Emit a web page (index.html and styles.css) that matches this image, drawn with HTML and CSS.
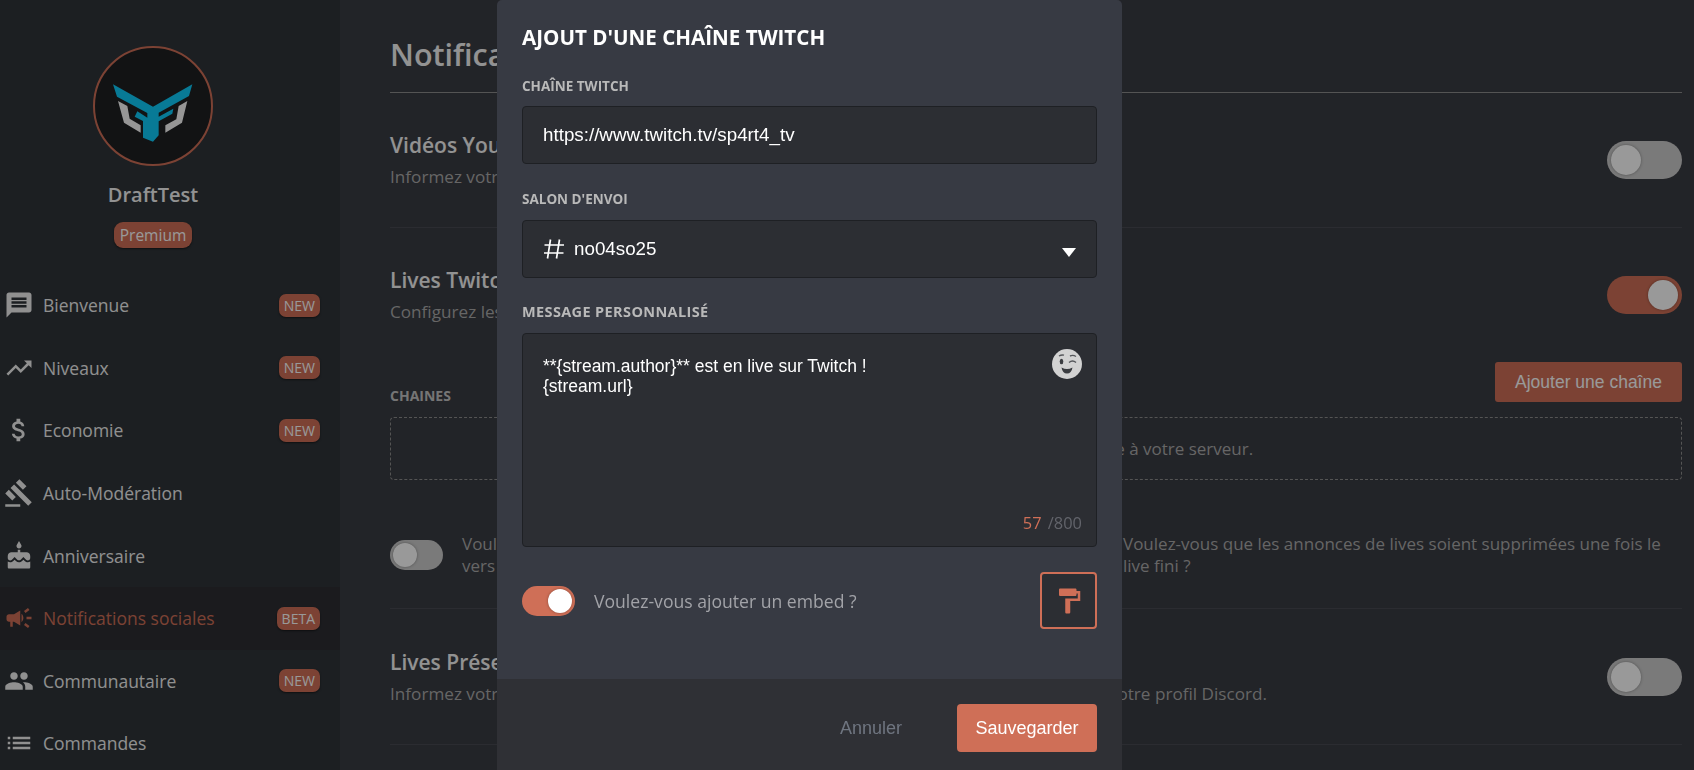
FILE: index.html
```html
<!DOCTYPE html>
<html lang="fr">
<head>
<meta charset="utf-8">
<title>Notifications sociales</title>
<link rel="stylesheet" href="styles.css">
</head>
<body>
<div class="app">
  <aside class="sidebar">
    <div class="guild">
      <div class="avatar">
        <svg class="logo" viewBox="0 0 270 210">
          <path fill="#0ecbfa" d="M15 25 135 92 253 25 243 60 152 110V122L196 98 193 113 152 136V178L135 197 105 185V135L80 122 88 106 118 125V111L27 62Z"/>
          <path fill="#fafafa" d="M30 75 58 90 65 128 98 148V170L48 140ZM238 75 212 90 205 130 172 148V170L222 140Z"/>
        </svg>
      </div>
      <div class="guild-name">DraftTest</div>
      <span class="premium">Premium</span>
    </div>
    <nav class="nav">
      <a class="nav-item"><svg class="nav-icon" viewBox="0 0 24 24"><path d="M20 2H4c-1.1 0-1.99.9-1.99 2L2 22l4-4h14c1.1 0 2-.9 2-2V4c0-1.1-.9-2-2-2zm-2 12H6v-2h12v2zm0-3H6V9h12v2zm0-3H6V6h12v2z"/></svg><span class="nav-label">Bienvenue</span><span class="badge">NEW</span></a>
      <a class="nav-item"><svg class="nav-icon" viewBox="0 0 24 24"><path d="M16 6l2.29 2.29-4.88 4.88-4-4L2 16.59 3.41 18l6-6 4 4 6.3-6.29L22 12V6z"/></svg><span class="nav-label">Niveaux</span><span class="badge">NEW</span></a>
      <a class="nav-item"><svg class="nav-icon" viewBox="0 0 24 24"><path d="M11.8 10.9c-2.27-.59-3-1.2-3-2.15 0-1.09 1.01-1.85 2.7-1.85 1.78 0 2.44.85 2.5 2.1h2.21c-.07-1.72-1.12-3.3-3.21-3.81V3h-3v2.16c-1.94.42-3.5 1.68-3.5 3.61 0 2.31 1.91 3.46 4.7 4.13 2.5.6 3 1.48 3 2.41 0 .69-.49 1.79-2.7 1.79-2.06 0-2.87-.92-2.98-2.1h-2.2c.12 2.19 1.76 3.42 3.68 3.83V21h3v-2.15c1.95-.37 3.5-1.5 3.5-3.55 0-2.84-2.43-3.81-4.7-4.4z"/></svg><span class="nav-label">Economie</span><span class="badge">NEW</span></a>
      <a class="nav-item"><svg class="nav-icon" viewBox="0 0 24 24"><path d="M1 21h12v2H1zM5.245 8.07l2.83-2.827 14.14 14.142-2.828 2.828zM12.317 1l5.657 5.656-2.83 2.83-5.654-5.66zM3.825 9.485l5.657 5.657-2.828 2.828-5.657-5.657z"/></svg><span class="nav-label">Auto-Modération</span></a>
      <a class="nav-item"><svg class="nav-icon" viewBox="0 0 24 24"><path d="M12 6c1.11 0 2-.9 2-2 0-.38-.1-.73-.29-1.03L12 0l-1.71 2.97c-.19.3-.29.65-.29 1.03 0 1.1.9 2 2 2zm4.6 9.99l-1.07-1.07-1.08 1.07c-1.3 1.3-3.58 1.31-4.89 0l-1.07-1.07-1.09 1.07C6.75 16.64 5.88 17 4.96 17c-.73 0-1.4-.23-1.96-.61V21c0 .55.45 1 1 1h16c.55 0 1-.45 1-1v-4.61c-.56.38-1.23.61-1.96.61-.92 0-1.79-.36-2.44-1.01zM18 9h-5V7h-2v2H6c-1.66 0-3 1.34-3 3v1.54c0 1.08.88 1.96 1.96 1.96.52 0 1.02-.2 1.38-.57l2.14-2.13 2.13 2.13c.74.74 2.03.74 2.77 0l2.14-2.13 2.13 2.13c.37.37.86.57 1.38.57 1.08 0 1.96-.88 1.96-1.96V12C21 10.34 19.66 9 18 9z"/></svg><span class="nav-label">Anniversaire</span></a>
      <a class="nav-item active"><svg class="nav-icon" viewBox="0 0 24 24"><path d="M18 11v2h4v-2h-4zm-2 6.61c.96.71 2.21 1.65 3.2 2.39.4-.53.8-1.07 1.2-1.6-.99-.74-2.24-1.68-3.2-2.4-.4.54-.8 1.08-1.2 1.61zM20.4 5.6c-.4-.53-.8-1.07-1.2-1.6-.99.74-2.24 1.68-3.2 2.4.4.53.8 1.07 1.2 1.6.96-.72 2.21-1.65 3.2-2.4zM4 9c-1.1 0-2 .9-2 2v2c0 1.1.9 2 2 2h1v4h2v-4h1l5 3V6L8 9H4zm11.5 3c0-1.33-.58-2.53-1.5-3.35v6.69c.92-.81 1.5-2.01 1.5-3.34z"/></svg><span class="nav-label">Notifications sociales</span><span class="badge">BETA</span></a>
      <a class="nav-item"><svg class="nav-icon" viewBox="0 0 24 24"><path d="M16 11c1.66 0 2.99-1.34 2.99-3S17.66 5 16 5c-1.66 0-3 1.34-3 3s1.34 3 3 3zm-8 0c1.66 0 2.99-1.34 2.99-3S9.66 5 8 5C6.34 5 5 6.34 5 8s1.34 3 3 3zm0 2c-2.33 0-7 1.17-7 3.5V19h14v-2.5c0-2.33-4.67-3.5-7-3.5zm8 0c-.29 0-.62.02-.97.05 1.16.84 1.97 1.97 1.97 3.45V19h6v-2.5c0-2.33-4.67-3.5-7-3.5z"/></svg><span class="nav-label">Communautaire</span><span class="badge">NEW</span></a>
      <a class="nav-item"><svg class="nav-icon" viewBox="0 0 24 24"><path d="M3 13h2v-2H3v2zm0 4h2v-2H3v2zm0-8h2V7H3v2zm4 4h14v-2H7v2zm0 4h14v-2H7v2zM7 7v2h14V7H7z"/></svg><span class="nav-label">Commandes</span></a>
    </nav>
  </aside>

  <main class="main">
    <h1 class="page-title">Notifications sociales</h1>

    <section class="setting">
      <div>
        <h2 class="setting-title">Vidéos YouTube</h2>
        <p class="setting-sub">Informez votre communauté lorsqu'une nouvelle vidéo est publiée.</p>
      </div>
      <span class="toggle toggle-lg"></span>
    </section>

    <section class="setting setting-open">
      <div>
        <h2 class="setting-title">Lives Twitch</h2>
        <p class="setting-sub">Configurez les annonces de lives de vos chaînes préférées.</p>
      </div>
      <span class="toggle toggle-lg toggle-on"></span>
    </section>

    <div class="channels-head">
      <span class="channels-label">CHAINES</span>
      <button class="btn-add">Ajouter une chaîne</button>
    </div>
    <div class="channels-empty">Aucune chaîne Twitch n'est encore liée à votre serveur.</div>

    <div class="options">
      <div class="option">
        <span class="toggle"></span>
        <span class="option-text">Voulez-vous que le message d'annonce soit envoyé<br>vers un autre salon de votre serveur ?</span>
      </div>
      <div class="option">
        <span class="toggle"></span>
        <span class="option-text">Voulez-vous que les annonces de lives soient supprimées une fois le live fini ?</span>
      </div>
    </div>

    <section class="setting setting-last">
      <div>
        <h2 class="setting-title">Lives Présence</h2>
        <p class="setting-sub">Informez votre communauté lorsqu'un membre passe en live, d'après le statut affiché sur votre profil Discord.</p>
      </div>
      <span class="toggle toggle-lg"></span>
    </section>
  </main>
</div>

<div class="overlay">
  <div class="modal">
    <div class="modal-body">
      <h3 class="modal-title">AJOUT D'UNE CHAÎNE TWITCH</h3>

      <div class="field-label field-label-first">CHAÎNE TWITCH</div>
      <div class="input">https://www.twitch.tv/sp4rt4_tv</div>

      <div class="field-label field-label-second">SALON D'ENVOI</div>
      <div class="input select">
        <svg class="hash" viewBox="0 0 22 22"><path d="M7.5 1.5 4.5 20.5M16.5 1.5 13.5 20.5M1.5 7H21M1 15H20.5"/></svg>
        <span class="select-value">no04so25</span>
        <span class="caret"></span>
      </div>

      <div class="field-label field-label-wide">MESSAGE PERSONNALISÉ</div>
      <div class="textarea">
        <div class="textarea-top">
          <div class="message">**{stream.author}** est en live sur Twitch !<br>{stream.url}</div>
          <svg class="emoji" viewBox="0 0 30 30">
            <circle cx="15" cy="15" r="15" fill="#d2d2d2"/>
            <ellipse cx="9.500" cy="12.500" rx="1.800" ry="2.800" fill="#3a3c40"/>
            <path d="M17 13.500q3.500-3 7 0M7 7q2.500-1.500 5-.8M18 7q3-1.500 6 .5" fill="none" stroke="#55575b" stroke-width="1.400"/>
            <path d="M9.500 18.500q5.500 3 11 0q-1 6-5.500 6t-5.500-6z" fill="#3a3c40"/>
          </svg>
        </div>
        <div class="count"><span class="count-now">57</span> <span class="count-max">/800</span></div>
      </div>

      <div class="embed-row">
        <span class="toggle toggle-accent"></span>
        <span class="embed-text">Voulez-vous ajouter un embed ?</span>
        <button class="embed-btn">
          <svg viewBox="0 0 24 24"><path d="M18 4V3c0-.55-.45-1-1-1H5c-.55 0-1 .45-1 1v4c0 .55.45 1 1 1h12c.55 0 1-.45 1-1V6h1v4H9v11c0 .55.45 1 1 1h2c.55 0 1-.45 1-1v-9h8V4h-3z"/></svg>
        </button>
      </div>
    </div>
    <div class="modal-footer">
      <button class="btn-cancel">Annuler</button>
      <button class="btn-save">Sauvegarder</button>
    </div>
  </div>
</div>
</body>
</html>
```

FILE: styles.css
```css
* { box-sizing: border-box; }

html, body {
  margin: 0;
  height: 770px;
  overflow: hidden;
  background: #3a3c43;
  font-family: "Open Sans", sans-serif;
}

.app {
  display: flex;
  height: 770px;
  overflow: hidden;
}

/* Sidebar */
.sidebar {
  flex: 0 0 340px;
  padding-top: 46px;
  background: #2f3439;
}

.guild {
  display: flex;
  flex-direction: column;
  align-items: center;
  width: 306px;
}

.avatar {
  width: 120px;
  height: 120px;
  display: flex;
  align-items: center;
  justify-content: center;
  padding-top: 10px;
  border: 2px solid #cf6f57;
  border-radius: 50%;
  background: #1e2022;
}

.logo { width: 90px; height: 70px; }

.guild-name {
  margin-top: 14px;
  font-size: 20px;
  font-weight: 600;
  line-height: 30px;
  color: #f4f4f4;
}

.premium {
  margin-top: 12px;
  padding: 0 6px;
  font-size: 15.500px;
  line-height: 26px;
  color: #fff;
  background: #cf6f57;
  border-radius: 9px;
  box-shadow: 0 1px 2px rgba(0, 0, 0, .5);
}

.nav { margin-top: 26px; }

.nav-item {
  display: flex;
  align-items: center;
  height: 62.600px;
  padding: 0 20px 0 4px;
  color: #f0f0f0;
}

.nav-icon {
  flex: 0 0 30px;
  width: 30px;
  height: 30px;
  fill: currentColor;
}

.nav-label {
  flex: 1;
  margin-left: 9px;
  font-size: 17.500px;
}

.nav-item.active {
  color: #cf6f57;
  background: #2d2e33;
}

.badge {
  padding: 0 5px;
  font-size: 14px;
  line-height: 23px;
  color: #fff;
  background: #cf6f57;
  border-radius: 7px;
  box-shadow: 0 1px 2px rgba(0, 0, 0, .5);
}

/* Main content */
.main {
  flex: 1;
  min-width: 0;
  padding: 32px 12px 0 50px;
}

.page-title {
  margin: 0;
  padding-bottom: 16px;
  font-size: 30.500px;
  font-weight: 600;
  line-height: 44px;
  color: #f4f4f4;
  border-bottom: 1px solid #8c8c8c;
}

.setting {
  display: flex;
  align-items: center;
  justify-content: space-between;
  padding: 37px 0 38px;
  border-bottom: 1px solid #484a52;
}

.setting-open { border-bottom: 0; padding-bottom: 0; }

.setting-last { padding-top: 38px; }

.setting-title {
  margin: 0;
  font-size: 21px;
  font-weight: 600;
  line-height: 30px;
  color: #f4f4f4;
}

.setting-sub {
  margin: 5px 0 0;
  font-size: 17.150px;
  line-height: 24px;
  color: #aaa;
}

.toggle {
  flex: none;
  display: flex;
  width: 53px;
  height: 30px;
  padding: 3px;
  border-radius: 15px;
  background: #cbcbcb;
}

.toggle::after {
  content: "";
  width: 24px;
  height: 24px;
  border-radius: 50%;
  background: #fff;
  box-shadow: 0 0 3px rgba(0, 0, 0, .35);
}

.toggle-lg {
  width: 75px;
  height: 38px;
  padding: 4px;
  border-radius: 19px;
}

.toggle-lg::after { width: 30px; height: 30px; }

.toggle-on, .toggle-accent {
  justify-content: flex-end;
  background: #cf6f57;
}

.channels-head {
  display: flex;
  align-items: flex-end;
  justify-content: space-between;
  margin-top: 38px;
}

.channels-label {
  margin-bottom: -4px;
  font-size: 14px;
  font-weight: 700;
  line-height: 20px;
  color: #c4c4c4;
}

.btn-add {
  width: 187px;
  height: 40px;
  padding: 0;
  border: 0;
  border-radius: 3px;
  font-family: "Liberation Sans", sans-serif;
  font-size: 17.500px;
  color: #fff;
  background: #cf6f57;
}

.channels-empty {
  height: 63px;
  margin-top: 15px;
  font-size: 17px;
  line-height: 61px;
  text-align: center;
  color: #aaa;
  border: 1px dashed #8c8c8c;
  border-radius: 4px;
}

.options {
  display: grid;
  grid-template-columns: 1fr 1fr;
  gap: 30px;
  margin-top: 53px;
  padding-bottom: 31px;
  border-bottom: 1px solid #484a52;
}

.option {
  display: flex;
  align-items: center;
  gap: 19px;
}

.option-text {
  font-size: 17px;
  line-height: 22px;
  color: #aaa;
}

/* Modal */
.overlay {
  position: fixed;
  inset: 0;
  padding-left: 497px;
  background: rgba(0, 0, 0, .4);
}

.modal {
  width: 625px;
  height: 790px;
  border-radius: 5px 5px 0 0;
  overflow: hidden;
  background: #373a43;
}

.modal-body { padding: 22px 25px 50px; }

.modal-title {
  margin: 0;
  font-size: 20.600px;
  font-weight: 700;
  line-height: 30px;
  color: #fff;
}

.field-label {
  margin: 24px 0 11px;
  font-size: 13.500px;
  font-weight: 700;
  line-height: 20px;
  color: #b9b9b9;
}

.field-label-first { margin-bottom: 10px; }

.field-label-second { margin-top: 25px; }

.field-label-wide { font-size: 14.500px; letter-spacing: .37px; }

.input {
  height: 58px;
  padding: 0 20px;
  font-family: "Liberation Sans", sans-serif;
  font-size: 18.800px;
  line-height: 56px;
  color: #fff;
  background: #2c2e33;
  border: 1px solid #1e2024;
  border-radius: 4px;
}

.select {
  display: flex;
  align-items: center;
}

.hash {
  width: 22px;
  height: 22px;
  fill: none;
  stroke: #fff;
  stroke-width: 1.700;
}

.select-value { flex: 1; margin-left: 9px; }

.caret {
  width: 0;
  height: 0;
  margin: 7px 0 0;
  border-left: 7.500px solid transparent;
  border-right: 7.500px solid transparent;
  border-top: 9px solid #fff;
}

.textarea {
  display: flex;
  flex-direction: column;
  justify-content: space-between;
  height: 214px;
  padding: 15px 14px 11px 20px;
  background: #2c2e33;
  border: 1px solid #1e2024;
  border-radius: 4px;
}

.textarea-top {
  display: flex;
  align-items: flex-start;
  justify-content: space-between;
}

.message {
  margin-top: 7px;
  font-family: "Liberation Sans", sans-serif;
  font-size: 17.500px;
  line-height: 20px;
  color: #fff;
}

.emoji { width: 30px; height: 30px; }

.count {
  font-size: 16.400px;
  line-height: 24px;
  text-align: right;
}

.count-now { color: #cf6f57; }

.count-max { margin-left: 2px; color: #62646b; }

.embed-row {
  display: flex;
  align-items: center;
  margin-top: 25px;
}

.embed-text {
  flex: 1;
  margin-left: 19px;
  font-size: 17.600px;
  line-height: 24px;
  color: #a2a3a8;
}

.embed-btn {
  display: flex;
  align-items: center;
  justify-content: center;
  width: 57px;
  height: 57px;
  padding: 0;
  background: #2c2e33;
  border: 2px solid #cf6f57;
  border-radius: 4px;
}

.embed-btn svg { width: 30px; height: 30px; fill: #cf6f57; }

.modal-footer {
  display: flex;
  align-items: flex-start;
  justify-content: flex-end;
  gap: 55px;
  height: 120px;
  padding: 25px 25px 0;
  background: #2f3035;
}

.btn-cancel {
  height: 48px;
  padding: 0;
  border: 0;
  background: none;
  font-family: "Liberation Sans", sans-serif;
  font-size: 18px;
  color: #6f7580;
}

.btn-save {
  width: 140px;
  height: 48px;
  padding: 0;
  border: 0;
  border-radius: 4px;
  font-family: "Liberation Sans", sans-serif;
  font-size: 18px;
  color: #fff;
  background: #cf6f57;
}
```
